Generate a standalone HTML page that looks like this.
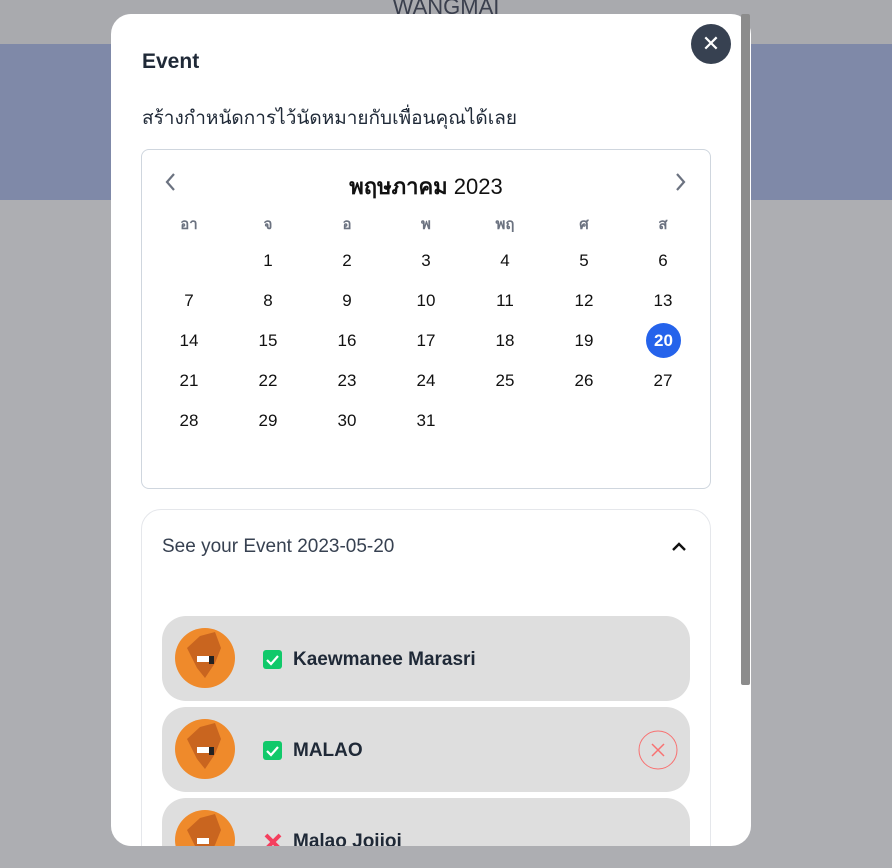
<!DOCTYPE html><html><head><meta charset="utf-8"><style>
*{box-sizing:border-box;margin:0;padding:0}
html,body{width:892px;height:868px;overflow:hidden}
body{background:#adaeb2;font-family:"Liberation Sans","Noto Sans CJK SC",sans-serif;position:relative}
.top{position:absolute;left:0;top:0;width:892px;height:44px;background:#a9aaae;text-align:center;font-size:22px;color:#3a3f4d;line-height:14px;overflow:hidden}
.band{position:absolute;left:0;top:44px;width:892px;height:156px;background:#7f89a8}
.modal{position:absolute;left:111px;top:14px;width:640px;height:832px;background:#fff;border-radius:20px;overflow:hidden}
.sb{position:absolute;left:741px;top:14px;width:9px;height:671px;background:#8c8c8c;border-radius:2px}
.close{position:absolute;left:691px;top:24px;width:40px;height:40px;border-radius:50%;background:#374151;color:#fff;text-align:center;line-height:40px;font-size:22px}
.abs{position:absolute}
.cal{position:absolute;left:30px;top:135px;width:570px;height:340px;border:1px solid #cfd6de;border-radius:8px}
.d{position:absolute;width:40px;text-align:center;font-size:17px;color:#111}
.h{color:#6b7280;font-size:15px;font-weight:bold}
.acc{position:absolute;left:30px;top:495px;width:570px;height:400px;border:1px solid #e5e7eb;border-radius:20px}
.item{position:absolute;left:51px;width:528px;height:85px;background:#dedede;border-radius:24px}
.av{position:absolute;left:13px;top:12px;width:60px;height:60px;border-radius:50%;background:#ef8a2b;overflow:hidden}
.nm{position:absolute;left:131px;top:33px;font-size:19px;font-weight:bold;color:#1f2937}
.ck{position:absolute;left:101px;top:34px;width:19px;height:19px;background:#10c96a;border-radius:3px}
</style></head><body>
<div class="top">WANGMAI</div><div class="band"></div>
<div class="modal">
<div class="abs" style="left:31px;top:36px;font-size:21px;font-weight:bold;color:#1f2937">Event</div>
<div class="abs" style="left:31px;top:89px;font-size:19px;color:#1f2937">สร้างกำหนัดการไว้นัดหมายกับเพื่อนคุณได้เลย</div>
<div class="cal">
<svg class="abs" style="left:22px;top:22px" width="14" height="20"><path d="M10 2 L3 10 L10 18" stroke="#6b7280" stroke-width="2.2" fill="none"/></svg>
<svg class="abs" style="left:531px;top:22px" width="14" height="20"><path d="M4 2 L11 10 L4 18" stroke="#6b7280" stroke-width="2.2" fill="none"/></svg>
<div class="abs" style="left:0;width:568px;top:19px;text-align:center;font-size:22px;color:#111"><b>พฤษภาคม</b> 2023</div>
</div>
<div class="acc">
<div class="abs" style="left:20px;top:26px;font-size:19px;color:#374151">See your Event 2023-05-20</div>
<svg class="abs" style="left:529px;top:31px" width="16" height="12"><path d="M2 9 L8 3 L14 9" stroke="#111" stroke-width="2.4" fill="none"/></svg>
</div>
<div class="item" style="top:602px"><div class="av"><svg width="60" height="60"><path d="M25 8 L40 4 L46 20 L40 35 L30 50 L22 40 L12 20Z" fill="#c9651f"/><rect x="22" y="28" width="12" height="6" fill="#fff"/><rect x="34" y="28" width="5" height="8" fill="#222"/></svg></div><div class="ck"><svg width="19" height="19"><path d="M4 10 L8 14 L15 6" stroke="#fff" stroke-width="2.2" fill="none"/></svg></div><div class="nm">Kaewmanee Marasri</div></div>
<div class="item" style="top:693px"><div class="av"><svg width="60" height="60"><path d="M25 8 L40 4 L46 20 L40 35 L30 50 L22 40 L12 20Z" fill="#c9651f"/><rect x="22" y="28" width="12" height="6" fill="#fff"/><rect x="34" y="28" width="5" height="8" fill="#222"/></svg></div><div class="ck"><svg width="19" height="19"><path d="M4 10 L8 14 L15 6" stroke="#fff" stroke-width="2.2" fill="none"/></svg></div><div class="nm">MALAO</div>
<svg class="abs" style="left:476px;top:23px" width="40" height="40"><circle cx="20" cy="20" r="19" stroke="#f87171" fill="none"/><path d="M14 14 L26 26 M26 14 L14 26" stroke="#f87171" stroke-width="1.5"/></svg></div>
<div class="item" style="top:784px"><div class="av"><svg width="60" height="60"><path d="M25 8 L40 4 L46 20 L40 35 L30 50 L22 40 L12 20Z" fill="#c9651f"/><rect x="22" y="28" width="12" height="6" fill="#fff"/></svg></div><svg class="abs" style="left:101px;top:34px" width="20" height="20"><path d="M3 3 L17 17 M17 3 L3 17" stroke="#f43f5e" stroke-width="4"/></svg><div class="nm">Malao Jojioj</div></div>
</div>
<div class="sb"></div>
<div class="close">✕</div>
<div id="days"></div>
<script>
var xs=[189,268,347,426,505,584,663],hd=["อา","จ","อ","พ","พฤ","ศ","ส"],o="";
for(var i=0;i<7;i++)o+='<div class="d h" style="left:'+(xs[i]-20)+'px;top:212px">'+hd[i]+'</div>';
for(var n=1;n<=31;n++){var c=n%7,r=Math.floor(n/7),y=251+r*40;
if(n==20)o+='<div class="abs" style="left:646px;top:323px;width:35px;height:35px;border-radius:50%;background:#2563eb;color:#fff;font-weight:bold;font-size:17px;text-align:center;line-height:35px">20</div>';
else o+='<div class="d" style="left:'+(xs[c]-20)+'px;top:'+y+'px">'+n+'</div>';}
document.getElementById("days").innerHTML=o;
</script>
</body></html>
